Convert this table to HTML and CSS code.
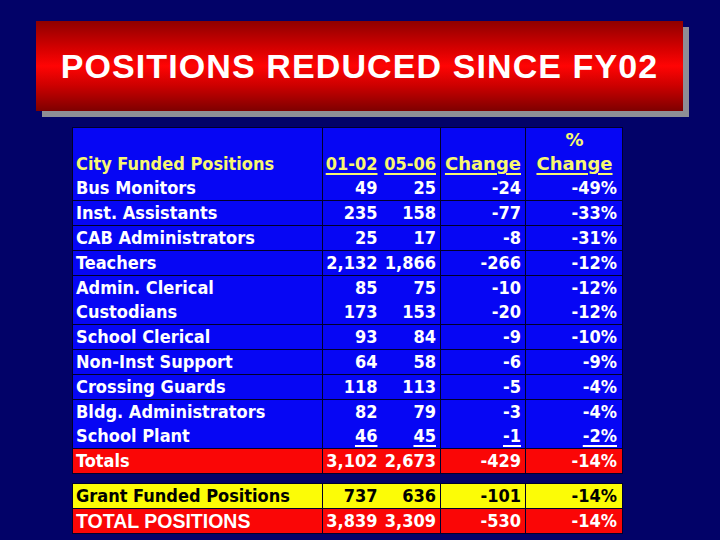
FILE: index.html
```html
<!DOCTYPE html>
<html lang="en">
<head>
<meta charset="utf-8">
<title>Positions Reduced Since FY02</title>
<link rel="stylesheet" href="styles.css">
</head>
<body>
<div class="slide">
  <div class="title">POSITIONS REDUCED SINCE FY02</div>

  <table class="data main">
    <colgroup>
      <col class="c1"><col class="c2"><col class="c3"><col class="c4"><col class="c5">
    </colgroup>
    <tr>
      <td class="lbl"><div class="ln"></div><div class="ln hd">City Funded Positions</div><div class="ln">Bus Monitors</div></td>
      <td class="num a"><div class="ln"></div><div class="ln hd"><u>01-02</u></div><div class="ln">49</div></td>
      <td class="num b"><div class="ln"></div><div class="ln hd"><u>05-06</u></div><div class="ln">25</div></td>
      <td class="num"><div class="ln"></div><div class="ln hd wide"><u>Change</u></div><div class="ln">-24</div></td>
      <td class="num p"><div class="ln hd ctr wide">%</div><div class="ln hd ctr wide"><u>Change</u></div><div class="ln">-49%</div></td>
    </tr>
    <tr>
      <td class="lbl"><div class="ln">Inst. Assistants</div></td>
      <td class="num a"><div class="ln">235</div></td>
      <td class="num b"><div class="ln">158</div></td>
      <td class="num"><div class="ln">-77</div></td>
      <td class="num p"><div class="ln">-33%</div></td>
    </tr>
    <tr>
      <td class="lbl"><div class="ln">CAB Administrators</div></td>
      <td class="num a"><div class="ln">25</div></td>
      <td class="num b"><div class="ln">17</div></td>
      <td class="num"><div class="ln">-8</div></td>
      <td class="num p"><div class="ln">-31%</div></td>
    </tr>
    <tr>
      <td class="lbl"><div class="ln">Teachers</div></td>
      <td class="num a"><div class="ln">2,132</div></td>
      <td class="num b"><div class="ln">1,866</div></td>
      <td class="num"><div class="ln">-266</div></td>
      <td class="num p"><div class="ln">-12%</div></td>
    </tr>
    <tr>
      <td class="lbl"><div class="ln">Admin. Clerical</div><div class="ln">Custodians</div></td>
      <td class="num a"><div class="ln">85</div><div class="ln">173</div></td>
      <td class="num b"><div class="ln">75</div><div class="ln">153</div></td>
      <td class="num"><div class="ln">-10</div><div class="ln">-20</div></td>
      <td class="num p"><div class="ln">-12%</div><div class="ln">-12%</div></td>
    </tr>
    <tr>
      <td class="lbl"><div class="ln">School Clerical</div></td>
      <td class="num a"><div class="ln">93</div></td>
      <td class="num b"><div class="ln">84</div></td>
      <td class="num"><div class="ln">-9</div></td>
      <td class="num p"><div class="ln">-10%</div></td>
    </tr>
    <tr>
      <td class="lbl"><div class="ln">Non-Inst Support</div></td>
      <td class="num a"><div class="ln">64</div></td>
      <td class="num b"><div class="ln">58</div></td>
      <td class="num"><div class="ln">-6</div></td>
      <td class="num p"><div class="ln">-9%</div></td>
    </tr>
    <tr>
      <td class="lbl"><div class="ln">Crossing Guards</div></td>
      <td class="num a"><div class="ln">118</div></td>
      <td class="num b"><div class="ln">113</div></td>
      <td class="num"><div class="ln">-5</div></td>
      <td class="num p"><div class="ln">-4%</div></td>
    </tr>
    <tr>
      <td class="lbl"><div class="ln">Bldg. Administrators</div><div class="ln">School Plant</div></td>
      <td class="num a"><div class="ln">82</div><div class="ln"><u>46</u></div></td>
      <td class="num b"><div class="ln">79</div><div class="ln"><u>45</u></div></td>
      <td class="num"><div class="ln">-3</div><div class="ln"><u>-1</u></div></td>
      <td class="num p"><div class="ln">-4%</div><div class="ln"><u>-2%</u></div></td>
    </tr>
    <tr class="red">
      <td class="lbl"><div class="ln">Totals</div></td>
      <td class="num a"><div class="ln">3,102</div></td>
      <td class="num b"><div class="ln">2,673</div></td>
      <td class="num"><div class="ln">-429</div></td>
      <td class="num p"><div class="ln">-14%</div></td>
    </tr>
  </table>

  <table class="data extra">
    <colgroup>
      <col class="c1"><col class="c2"><col class="c3"><col class="c4"><col class="c5">
    </colgroup>
    <tr class="yellow">
      <td class="lbl"><div class="ln">Grant Funded Positions</div></td>
      <td class="num a"><div class="ln">737</div></td>
      <td class="num b"><div class="ln">636</div></td>
      <td class="num"><div class="ln">-101</div></td>
      <td class="num p"><div class="ln">-14%</div></td>
    </tr>
    <tr class="red">
      <td class="lbl arial"><div class="ln">TOTAL POSITIONS</div></td>
      <td class="num a"><div class="ln">3,839</div></td>
      <td class="num b"><div class="ln">3,309</div></td>
      <td class="num"><div class="ln">-530</div></td>
      <td class="num p"><div class="ln">-14%</div></td>
    </tr>
  </table>
</div>
</body>
</html>
```

FILE: styles.css
```css
html, body {
  margin: 0;
  padding: 0;
}

body {
  width: 720px;
  height: 540px;
  overflow: hidden;
  background: #020268;
  font-family: "DejaVu Sans Condensed", "DejaVu Sans", sans-serif;
}

.slide {
  padding-top: 21px;
}

.title {
  margin-left: 36px;
  width: 647px;
  height: 90px;
  display: flex;
  align-items: center;
  justify-content: center;
  background: linear-gradient(to bottom, #8e0000 0%, #d40000 30%, #ff0404 50%, #cc0000 72%, #7e0000 100%);
  box-shadow: 6px 6px 0 #8e8e96;
  color: #ffffff;
  font-family: "Liberation Sans", Arial, sans-serif;
  font-weight: bold;
  font-size: 34px;
  letter-spacing: 1.1px;
}

.data {
  margin-left: 72px;
  width: 550px;
  border-collapse: collapse;
  table-layout: fixed;
  font-family: "DejaVu Sans Condensed", "DejaVu Sans", sans-serif;
  font-stretch: condensed;
  font-weight: bold;
  font-size: 18px;
  color: #ffffff;
}

.main {
  margin-top: 16px;
}

.extra {
  margin-top: 9px;
}

.c1 { width: 250px; }
.c2 { width: 59px; }
.c3 { width: 59px; }
.c4 { width: 85px; }
.c5 { width: 97px; }

.data td {
  background: #0606f4;
  border: 1px solid #00002c;
  padding: 0;
  vertical-align: top;
}

.data td.a {
  border-right-style: hidden;
}

.data td.b {
  border-left-style: hidden;
}

.ln {
  height: 24px;
  line-height: 24px;
  white-space: nowrap;
}

.lbl {
  padding-left: 3px !important;
  text-align: left;
}

.num {
  text-align: right;
  padding-right: 4px !important;
}

.num.p {
  padding-right: 5px !important;
}

.hd {
  color: #f8f870;
}

.wide {
  font-family: "DejaVu Sans", sans-serif;
  font-stretch: normal;
}

.ctr {
  text-align: center;
  padding-left: 6px;
}

u {
  text-decoration-thickness: 2px;
  text-underline-offset: 3px;
}

.data tr.red td {
  background: #fa0606;
}

.data tr.yellow td {
  background: #fcfc06;
  color: #000000;
}

.arial {
  font-family: "Liberation Sans", Arial, sans-serif;
  font-stretch: normal;
  font-size: 19.5px;
}
```
